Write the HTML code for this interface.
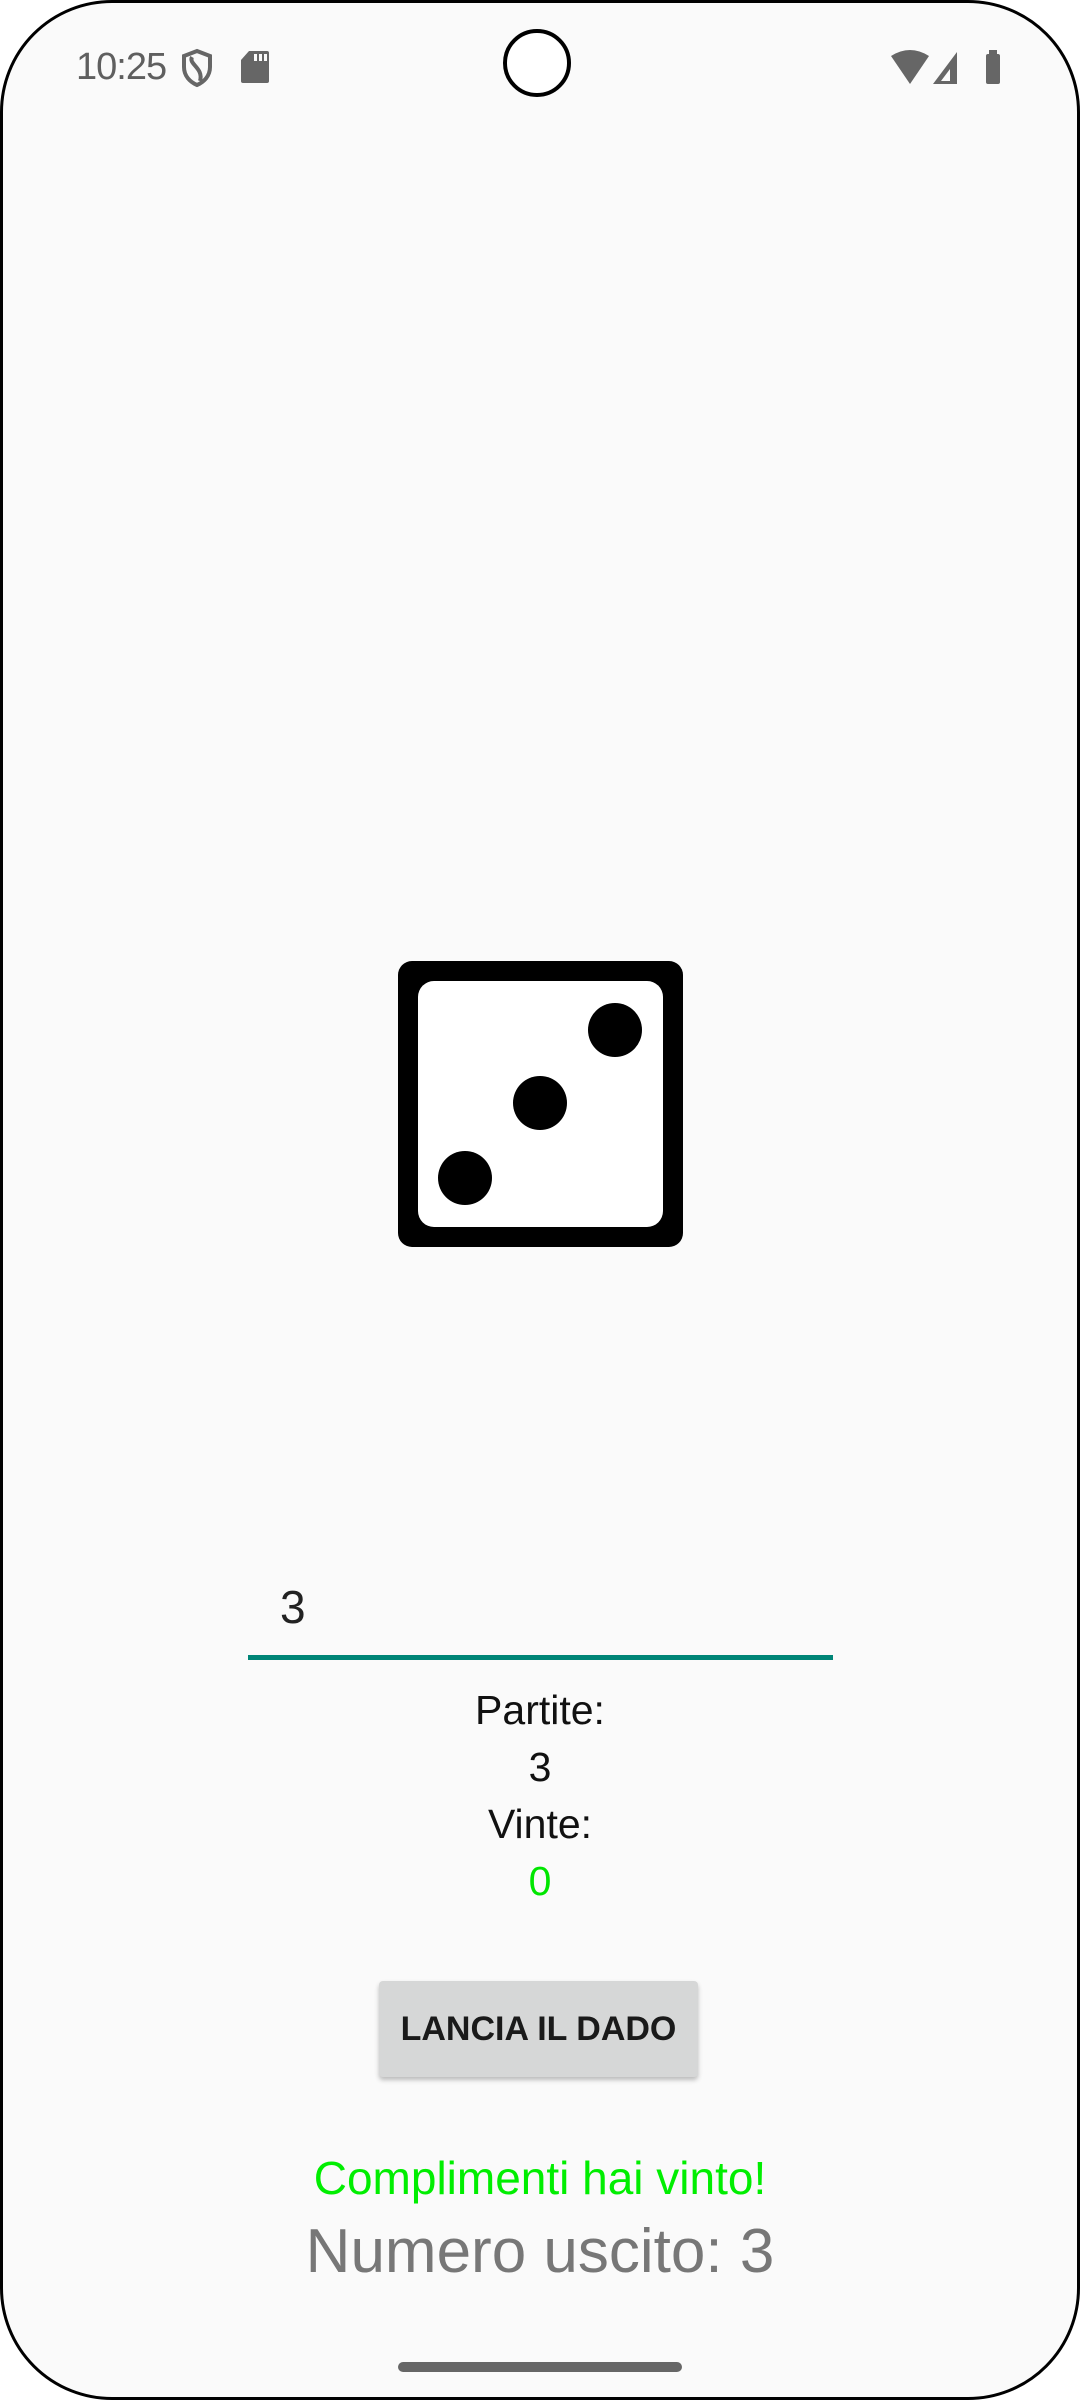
<!DOCTYPE html>
<html><head><meta charset="utf-8">
<style>
html,body{margin:0;padding:0;background:#fff;}
body{width:1080px;height:2400px;position:relative;overflow:hidden;font-family:"Liberation Sans",sans-serif;}
#scr{position:absolute;left:0;top:0;width:1074px;height:2394px;border:3px solid #000;border-radius:112px;background:#fafafa;overflow:hidden;}
.c{position:absolute;left:0;width:1080px;text-align:center;}
</style></head><body>
<div id="scr"></div>
<div style="position:absolute;left:76px;top:46px;font-size:38px;color:#5f5f5f;letter-spacing:-1px">10:25</div>
<svg style="position:absolute;left:180px;top:48px" width="34" height="40" viewBox="0 0 34 40"><path d="M17 3 L30 8 V19 C30 28 24 34 17 37 C10 34 4 28 4 19 V8 Z" fill="none" stroke="#666" stroke-width="4"/><path d="M12 9 C8 16 24 20 20 33" fill="none" stroke="#666" stroke-width="4"/></svg>
<svg style="position:absolute;left:240px;top:50px" width="30" height="34" viewBox="0 0 30 34"><path d="M9 1 H27 Q29 1 29 3 V31 Q29 33 27 33 H3 Q1 33 1 31 V10 Z" fill="#666"/><rect x="14" y="4" width="3" height="7" fill="#fafafa"/><rect x="19" y="4" width="3" height="7" fill="#fafafa"/><rect x="24" y="4" width="3" height="7" fill="#fafafa"/></svg>
<div style="position:absolute;left:503px;top:29px;width:68px;height:68px;border:4px solid #000;border-radius:50%;box-sizing:border-box;background:#fff"></div>
<svg style="position:absolute;left:890px;top:48px" width="120" height="38" viewBox="0 0 120 38"><path d="M1 8 Q20 -4 39 8 L20 36 Z" fill="#666"/><path d="M43 36 L67 4 V36 Z" fill="#666"/><path d="M51 33 L60 21 V33 Z" fill="#fafafa"/><rect x="96" y="6" width="14" height="30" rx="2" fill="#666"/><rect x="99" y="2" width="8" height="5" fill="#666"/></svg>
<svg style="position:absolute;left:398px;top:961px" width="285" height="286" viewBox="0 0 285 286">
<rect x="0" y="0" width="285" height="286" rx="14" fill="#000"/>
<rect x="20" y="20" width="245" height="246" rx="16" fill="#fff"/>
<circle cx="217" cy="69" r="27" fill="#000"/><circle cx="142" cy="142" r="27" fill="#000"/><circle cx="67" cy="217" r="27" fill="#000"/>
</svg>
<div style="position:absolute;left:280px;top:1580px;font-size:46px;color:#222">3</div>
<div style="position:absolute;left:248px;top:1655px;width:585px;height:5px;background:#008577"></div>
<div class="c" style="top:1682px;font-size:41px;line-height:57px;color:#111">Partite:<br>3<br>Vinte:<br><span style="color:#00e600">0</span></div>
<div style="position:absolute;left:379px;top:1981px;width:319px;height:96px;background:#d6d7d7;border-radius:4px;box-shadow:0 3px 5px rgba(0,0,0,0.25);text-align:center;line-height:96px;font-size:34px;font-weight:bold;color:#1a1a1a">LANCIA IL DADO</div>
<div class="c" style="top:2150px;font-size:46px;line-height:56px;color:#00ee00">Complimenti hai vinto!</div>
<div class="c" style="top:2214px;font-size:62px;line-height:76px;color:#777">Numero uscito: 3</div>
<div style="position:absolute;left:398px;top:2362px;width:284px;height:10px;border-radius:5px;background:#666"></div>
</body></html>
